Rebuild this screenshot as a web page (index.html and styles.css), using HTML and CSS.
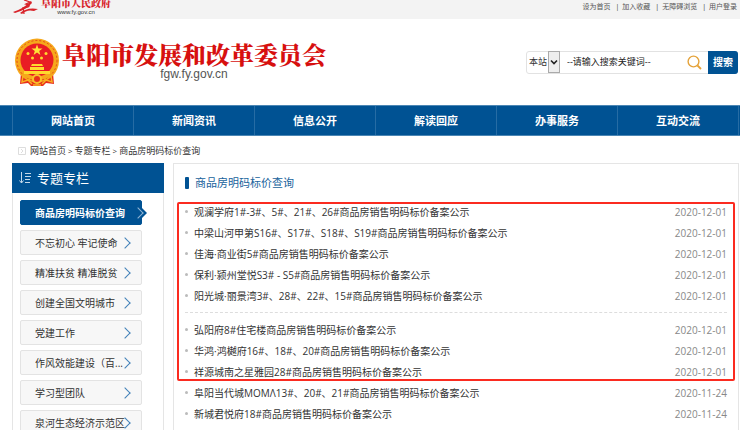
FILE: index.html
```html
<!DOCTYPE html>
<html lang="zh-CN">
<head>
    <meta charset="UTF-8">
    <title>商品房明码标价查询</title>
    <link rel="stylesheet" href="styles.css">
</head>
<body>
<div class="topbar">
    <a class="gov" href="#">
        <svg class="gov-mark" width="28" height="16" viewBox="0 0 28 16">
            <path d="M1 12Q11 9 19 1L20 3Q14 10 3 13Z M8 13Q15 7 26 9L22 11Q15 9 10 14Z" fill="#d8232a"/>
            <path d="M12 0L18 2L14 4Q19 5 16 7L12 8M11 7L12 14" fill="none" stroke="#d8232a" stroke-width="1.3"/>
        </svg>
        <span class="gov-text">
            <b>阜阳市人民政府</b>
            <small>www.fy.gov.cn</small>
        </span>
    </a>
    <ul class="toplinks">
        <li><a href="#">设为首页</a></li>
        <li><a href="#">加入收藏</a></li>
        <li><a href="#">无障碍浏览</a></li>
        <li><a href="#">用户登录</a></li>
    </ul>
</div>
<div class="header">
    <a class="logo" href="#">
        <svg width="46" height="49" viewBox="0 0 46 49">
            <path d="M7 35L6 46L14 45L17 48H29L32 45L40 46L39 35Z" fill="#e8301c"/>
            <circle cx="23" cy="22.500" r="22" fill="#f6a81c"/>
            <circle cx="23" cy="22.500" r="20" fill="none" stroke="#e5451b" stroke-width="1" stroke-dasharray="2 2"/>
            <circle cx="23" cy="22" r="16.500" fill="#e91c24"/>
            <path d="M23 6.500L24.400 10.500H28.500L25.200 13L26.400 17L23 14.600L19.600 17L20.800 13L17.500 10.500H21.600Z" fill="#ffe437"/>
            <g fill="#ffd92e">
                <circle cx="14" cy="15.500" r="1.500"/>
                <circle cx="32" cy="15.500" r="1.500"/>
                <circle cx="18.500" cy="20" r="1.500"/>
                <circle cx="27.500" cy="20" r="1.500"/>
                <path d="M17 28L18 26H28L29 28ZM16 29H30V32H16ZM10 33H36V36H10Z"/>
            </g>
            <path d="M8 36Q23 41 38 36L37 39Q23 43 9 39Z" fill="#f6a81c"/>
            <circle cx="23" cy="41" r="4" fill="#e8301c" stroke="#f8c02a" stroke-width="2"/>
            <path d="M9 38L8 44L14 42L18 46M37 38L38 44L32 42L28 46M19 47H27" fill="none" stroke="#f8b222" stroke-width="1.500"/>
        </svg>
        <span class="logo-text">
            <b>阜阳市发展和改革委员会</b>
            <small>fgw.fy.gov.cn</small>
        </span>
    </a>
    <form class="search">
        <label class="scope">
            <select aria-label="搜索范围">
                <option>本站</option>
            </select>
            <svg width="12" height="22" viewBox="0 0 12 22">
                <rect x=".5" y=".5" width="11" height="21" fill="#eee" stroke="#aaa"/>
                <path d="M3 9.500L6 12.500L9 9.500" fill="none" stroke="#222" stroke-width="1.600"/>
            </svg>
        </label>
        <input type="text" aria-label="关键词" placeholder="--请输入搜索关键词--">
        <svg class="glass" width="15" height="15" viewBox="0 0 15 15">
            <circle cx="6.500" cy="6.500" r="5.400" fill="none" stroke="#e5a33a" stroke-width="1.400"/>
            <path d="M10.500 10.500L14 14" stroke="#e5a33a" stroke-width="1.800"/>
        </svg>
        <button type="button">搜索</button>
    </form>
</div>
<ul class="nav">
    <li><a href="#">网站首页</a></li>
    <li><a href="#">新闻资讯</a></li>
    <li><a href="#">信息公开</a></li>
    <li><a href="#">解读回应</a></li>
    <li><a href="#">办事服务</a></li>
    <li><a href="#">互动交流</a></li>
</ul>
<div class="crumb">
    <svg width="8" height="8" viewBox="0 0 8 8">
        <path d="M.5 .5H7.500V7.500H.5ZM3 2L5 4L3 6" fill="none" stroke="#ddd"/>
    </svg>
    <a href="#">网站首页</a><i>&gt;</i><a href="#">专题专栏</a><i>&gt;</i><a href="#">商品房明码标价查询</a>
</div>
<div class="main">
    <div class="side">
        <h2>
            <svg width="12" height="12" viewBox="0 0 12 12">
                <path d="M2.500 0V11M.5 8.500L2.500 11L4.500 8.500M6 1.500H12M6 4.500H12M6 7.500H11M6 10.500H11" fill="none" stroke="#c5d9ea"/>
            </svg>
            专题专栏
        </h2>
        <ul class="menu">
            <li class="select"><a href="#">商品房明码标价查询</a></li>
            <li><a href="#">不忘初心 牢记使命</a></li>
            <li><a href="#">精准扶贫 精准脱贫</a></li>
            <li><a href="#">创建全国文明城市</a></li>
            <li><a href="#">党建工作</a></li>
            <li><a href="#">作风效能建设（百...</a></li>
            <li><a href="#">学习型团队</a></li>
            <li><a href="#">泉河生态经济示范区</a></li>
        </ul>
    </div>
    <div class="content">
        <h1>商品房明码标价查询</h1>
        <div class="marked">
            <ul class="list line">
                <li><a href="#">观澜学府1#-3#、5#、21#、26#商品房销售明码标价备案公示</a><span>2020-12-01</span></li>
                <li><a href="#">中梁山河甲第S16#、S17#、S18#、S19#商品房销售明码标价备案公示</a><span>2020-12-01</span></li>
                <li><a href="#">佳海·商业街5#商品房销售明码标价备案公示</a><span>2020-12-01</span></li>
                <li><a href="#">保利·颍州堂悦S3# - S5#商品房销售明码标价备案公示</a><span>2020-12-01</span></li>
                <li><a href="#">阳光城·丽景湾3#、28#、22#、15#商品房销售明码标价备案公示</a><span>2020-12-01</span></li>
            </ul>
            <ul class="list">
                <li><a href="#">弘阳府8#住宅楼商品房销售明码标价备案公示</a><span>2020-12-01</span></li>
                <li><a href="#">华鸿·鸿樾府16#、18#、20#商品房销售明码标价备案公示</a><span>2020-12-01</span></li>
                <li><a href="#">祥源城南之星雅园28#商品房销售明码标价备案公示</a><span>2020-12-01</span></li>
            </ul>
        </div>
        <ul class="list">
            <li><a href="#">阜阳当代城MOMΛ13#、20#、21#商品房销售明码标价备案公示</a><span>2020-11-24</span></li>
            <li><a href="#">新城君悦府18#商品房销售明码标价备案公示</a><span>2020-11-24</span></li>
        </ul>
    </div>
</div>
</body>
</html>
```
FILE: styles.css
```css
*{
    margin: 0;
    padding: 0;
    box-sizing: border-box;
}
ul{
    list-style: none;
}
a{
    color: inherit;
    text-decoration: none;
}
svg{
    display: block;
    flex: none;
}
body{
    height: 100vh;
    overflow: hidden;
    background: #fff;
    color: #333;
    font: 10px/20px "Open Sans", "Noto Sans CJK SC", sans-serif;
    white-space: nowrap;
}

/* top */
.topbar{
    display: flex;
    justify-content: space-between;
    height: 19px;
    padding: 0 3px 0 12px;
    background: #f3f3f3;
    overflow: hidden;
}
.gov{
    display: flex;
    gap: 1px;
}
.gov-text{
    display: flex;
    flex-direction: column;
    align-items: center;
    margin-top: -3px;
}
.gov-text b{
    color: #d8232a;
    font: 900 10px/12px "Noto Serif CJK SC", "Noto Sans CJK SC", serif;
}
.gov-text small{
    font: 6px/6px "Liberation Sans", sans-serif;
}
.toplinks{
    display: flex;
    color: #555;
    font-size: 7px;
    line-height: 14px;
}
.toplinks li + li::before{
    content: "|";
    margin: 0 3px 0 5px;
    color: #333;
}
.header{
    display: flex;
    justify-content: space-between;
    align-items: center;
    height: 86px;
    padding: 0 2px 0 14px;
}
.logo{
    display: flex;
    gap: 2px;
}
.logo-text{
    display: flex;
    flex-direction: column;
    align-items: center;
    padding-top: 2px;
}
.logo-text b{
    color: #d7100f;
    font: 900 24px/28px "Noto Serif CJK SC", "Noto Sans CJK SC", serif;
}
.logo-text small{
    color: #555;
    font: 12px/12px "Liberation Sans", sans-serif;
}
.search{
    display: flex;
    align-items: center;
    width: 212px;
    height: 23px;
    border: 1px solid #e2e2e2;
    border-radius: 3px;
}
.scope{
    display: flex;
}
.scope select{
    width: 21px;
    padding-left: 2px;
    border: 0;
    background: none;
    appearance: none;
    color: #333;
    font: 9px/20px "Noto Sans CJK SC", sans-serif;
}
.search input{
    flex: 1;
    min-width: 0;
    height: 20px;
    padding-left: 7px;
    border: 0;
    outline: 0;
    background: none;
    font: 9px/20px "Open Sans", "Noto Sans CJK SC", sans-serif;
}
.search input::placeholder{
    color: #222;
}
.glass{
    margin-right: 7px;
}
.search button{
    align-self: stretch;
    width: 30px;
    margin: -1px;
    border: 0;
    border-radius: 0 3px 3px 0;
    background: #005293;
    color: #fff;
    font: bold 10px/20px "Noto Sans CJK SC", sans-serif;
}

/* nav */
.nav{
    display: flex;
    height: 31px;
    padding: 0 1px 0 12px;
    border-top: 1px solid #4b86b4;
    border-bottom: 1px solid #4b86b4;
    background: #005293;
}
.nav li{
    flex: 1;
    border-left: 1px solid #266ca4;
    color: #fff;
    font-size: 11px;
    font-weight: bold;
    line-height: 30px;
    text-align: center;
}
.nav li:last-child{
    border-right: 1px solid #266ca4;
}
.crumb{
    display: flex;
    align-items: center;
    height: 27px;
    padding: 2px 0 0 18px;
    font-size: 9px;
}
.crumb svg{
    margin-right: 4px;
}
.crumb i{
    margin: 0 2px;
    font-size: 8px;
    font-style: normal;
}

/* columns */
.main{
    display: flex;
    gap: 9px;
    margin: 0 1px 0 12px;
}
.side{
    width: 152px;
    border: 1px solid #e5e5e5;
    border-top: 0;
}
.side h2{
    display: flex;
    align-items: center;
    gap: 6px;
    height: 30px;
    margin: 0 -1px;
    padding-left: 7px;
    background: #005293;
    color: #fff;
    font-size: 13px;
    font-weight: normal;
}
.menu{
    padding: 7px 21px 7px 7px;
}
.menu li{
    position: relative;
    height: 25px;
    margin-bottom: 5px;
    padding-left: 14px;
    border: 1px solid #e3e3e3;
    border-radius: 2px;
    background: #f7f7f7;
    line-height: 24px;
}
.menu li::after{
    content: "";
    position: absolute;
    top: 8px;
    right: 12px;
    width: 7px;
    height: 7px;
    border: solid #4080b8;
    border-width: 1px 1px 0 0;
    transform: rotate(45deg);
}
.menu .select{
    border-color: #005293;
    background: #005293;
    color: #fff;
    font-weight: bold;
}
.menu .select::before{
    content: "";
    position: absolute;
    top: 6px;
    right: -6px;
    border: solid transparent;
    border-width: 6px 0 6px 6px;
    border-left-color: #005293;
}
.menu .select::after{
    right: -1px;
    border-color: #8fb5d5;
}
.content{
    flex: 1;
    padding: 0 11px 16px;
    border: 1px solid #e5e5e5;
}
.content h1{
    display: flex;
    align-items: center;
    gap: 6px;
    height: 37px;
    color: #20639c;
    font-size: 11px;
    font-weight: normal;
}
.content h1::before{
    content: "";
    width: 4px;
    height: 12px;
    border-radius: 1px;
    background: #005293;
}
.list li{
    display: flex;
    align-items: center;
    height: 21px;
}
.list li::before{
    content: "";
    width: 3px;
    height: 3px;
    margin-right: 6px;
    border-radius: 50%;
    background: #bbb;
}
.list span{
    margin-left: auto;
    color: #888;
}
.line{
    margin-bottom: 6px;
    padding-bottom: 6px;
    border-bottom: 1px dashed #ddd;
}
.marked{
    position: relative;
}
.marked::after{
    content: "";
    position: absolute;
    top: 1px;
    right: -8px;
    bottom: 1px;
    left: -8px;
    border: 2px solid #fb2b20;
    border-radius: 2px;
    pointer-events: none;
}
```
